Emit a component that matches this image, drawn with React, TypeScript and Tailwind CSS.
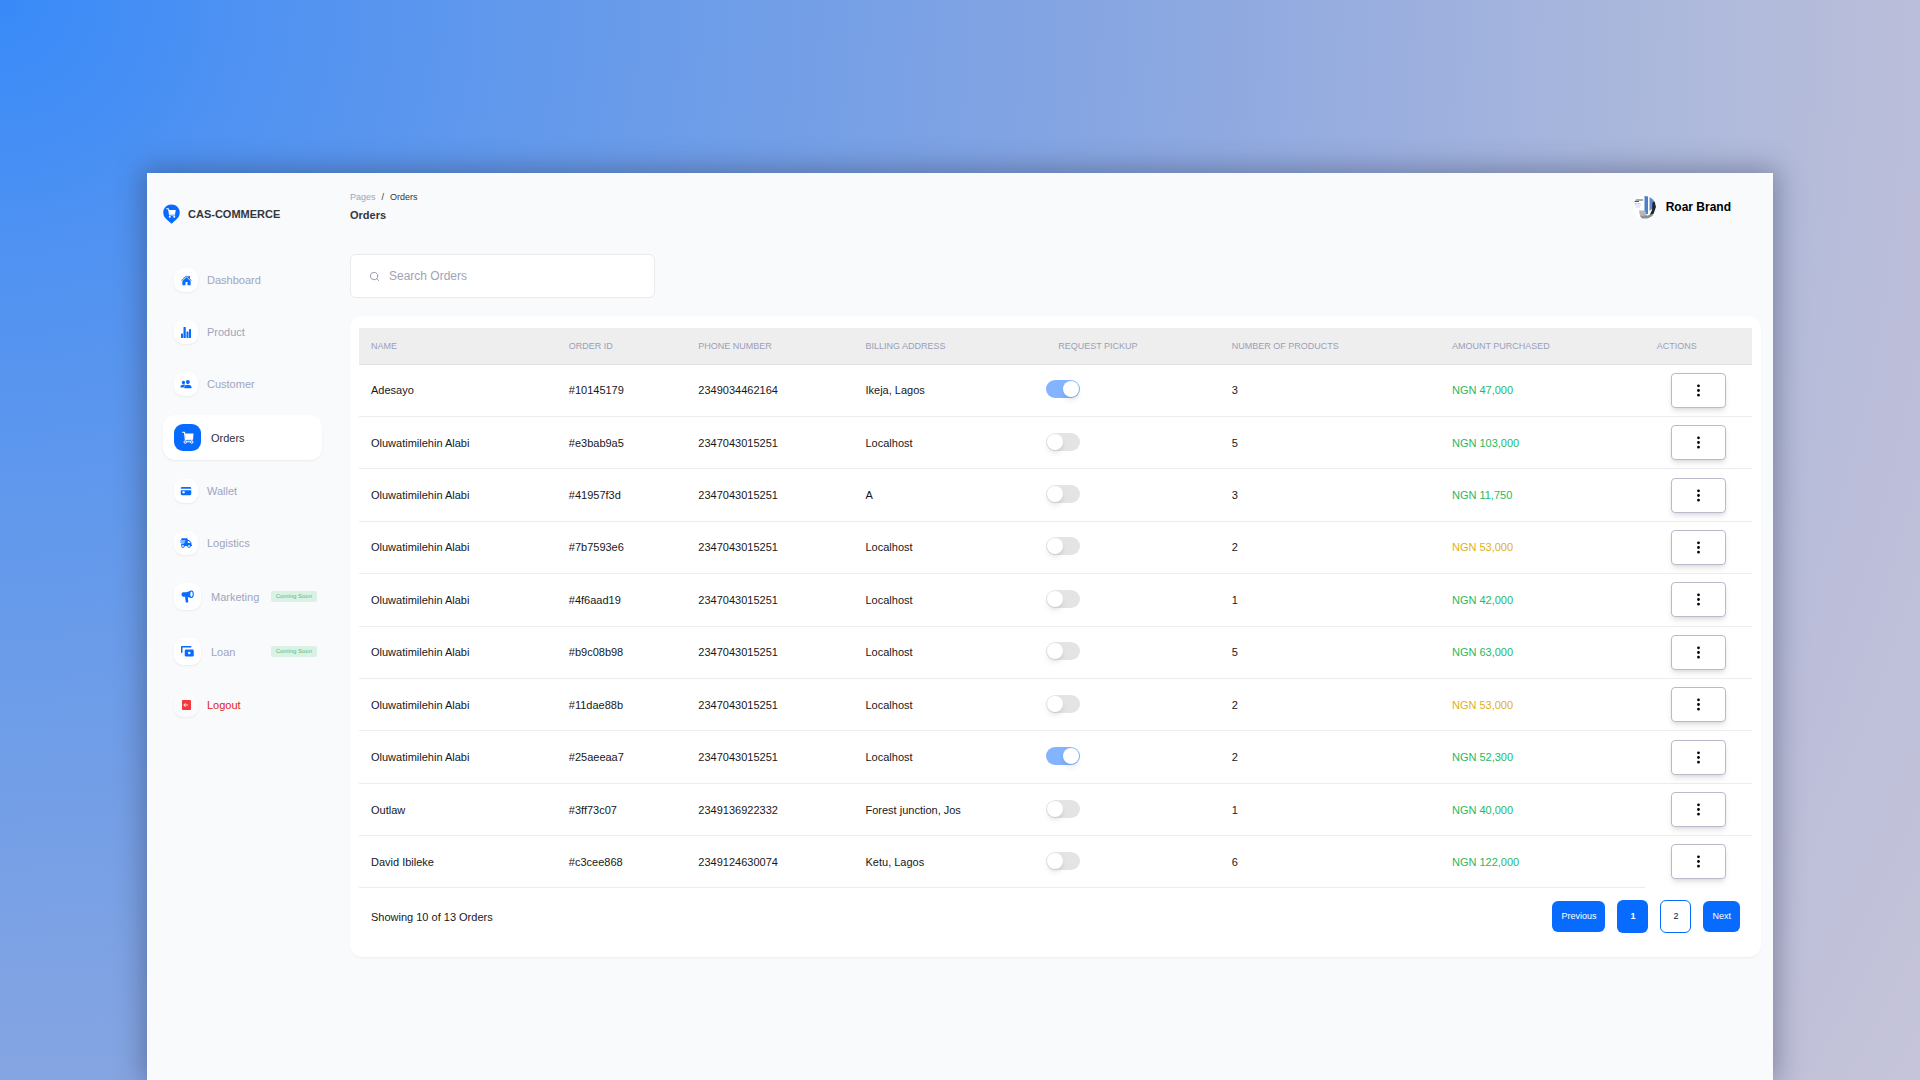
import clsx from "clsx";
import { useState } from "react";
import type { ReactNode } from "react";
import { BsThreeDotsVertical } from "react-icons/bs";
import { FaShippingFast } from "react-icons/fa";
import { IoCard, IoHome, IoPeople } from "react-icons/io5";
import { FiSearch } from "react-icons/fi";

type NavItem = {
  label: string;
  icon: ReactNode;
  big?: boolean;
  active?: boolean;
  soon?: boolean;
  danger?: boolean;
};

type Order = {
  name: string;
  id: string;
  phone: string;
  address: string;
  pickup: boolean;
  products: number;
  amount: string;
  pending?: boolean;
};

const BarsIcon = () => (
  <svg viewBox="0 0 20 22" className="w-[10px] h-[11px]" fill="currentColor">
    <rect x="0" y="13" width="4" height="9" rx="1" />
    <rect x="5" y="0" width="4.500" height="22" rx="1" />
    <rect x="11" y="9" width="4" height="13" rx="1" />
    <rect x="16" y="4" width="4" height="18" rx="1" />
  </svg>
);

const CartIcon = () => (
  <svg viewBox="0 0 24 26" className="w-3 h-[13px]" fill="none">
    <path d="M1 2.5h4l1.6 15h14" stroke="currentColor" strokeWidth="2.2" strokeLinecap="round" strokeLinejoin="round" />
    <path d="M6 5h17l-.8 12H7z" fill="currentColor" />
    <circle cx="6.500" cy="22" r="2.500" stroke="currentColor" strokeWidth="2" />
    <circle cx="19.500" cy="22" r="2.500" stroke="currentColor" strokeWidth="2" />
    <path d="M9 21.500h8" stroke="currentColor" strokeWidth="2" />
  </svg>
);

const MegaphoneIcon = () => (
  <svg viewBox="0 0 26 26" className="w-[13px] h-[13px]" fill="none">
    <path d="M1 9C1 5.500 3 4.500 6 4.500c6 0 10-1 14-3.500v15c-4-2-8-2.500-13-2.500-4 0-6-1-6-4.500z" fill="currentColor" />
    <ellipse cx="21" cy="8.500" rx="3.500" ry="6.500" fill="#fff" stroke="currentColor" strokeWidth="2.200" />
    <path d="M8 13h5.500l1 10.500c.1 1-.3 1.500-1.300 1.500h-2.400c-.8 0-1.200-.4-1.300-1.200z" fill="currentColor" />
  </svg>
);

const LoanIcon = () => (
  <svg viewBox="0 0 26 22" className="w-[13px] h-[11px]" fill="none">
    <path d="M1.5 12.5v-11h18" stroke="currentColor" strokeWidth="3" strokeLinecap="round" strokeLinejoin="round" />
    <rect x="7.500" y="7" width="18" height="14" rx="2.5" fill="currentColor" />
    <circle cx="16.500" cy="14" r="2.500" fill="#fff" />
  </svg>
);

const LogoutIcon = () => (
  <svg viewBox="0 0 18 20" className="w-[9px] h-[10px]" fill="none">
    <rect width="18" height="20" rx="1.5" fill="currentColor" />
    <path d="M7 6.5L3.5 10L7 13.5M4 10h8" stroke="#fff" strokeWidth="1.8" />
  </svg>
);

const Logo = () => (
  <svg viewBox="0 0 34 40" className="w-[17px] h-5 shrink-0">
    <path d="M17 1C8 1 0.5 8 0.5 17c0 7 4 11.500 8 15l8.500 7.500 8.500-7.500c4-3.500 8-8 8-15C33.500 8 26 1 17 1z" fill="#086bff" />
    <path d="M7.500 9.500h3.500l2 12.500h10.500" stroke="#fff" strokeWidth="2" fill="none" strokeLinecap="round" />
    <path d="M11.500 12h14l-1.500 9h-11z" fill="#fff" />
    <circle cx="13.500" cy="25.500" r="2" fill="#fff" />
    <circle cx="22.500" cy="25.500" r="2" fill="#fff" />
  </svg>
);

const Avatar = () => (
  <svg viewBox="0 0 46 46" className="w-[23px] h-[23px] rounded-full">
    <rect width="46" height="46" fill="#fff" />
    <path d="M2 8h18M2 11h10" stroke="#555" strokeWidth="2" />
    <path d="M3 15h12M3 18h13M5 22h9" stroke="#b9c6ee" strokeWidth="1.500" />
    <path d="M23 0h7v36h-7z" fill="#4d7fc4" />
    <path d="M33 0h6l4 8v14l-10 8z" fill="#5b8bcb" />
    <path d="M39 13l5-3 2 12-5 14-8 3 5-11z" fill="#23252e" />
    <path d="M12 29h12l4 11H14z" fill="#b4b6ba" />
    <path d="M14 40l15-1 9-3 3 3-11 6H18z" fill="#8b8e94" />
  </svg>
);

const navItems: NavItem[] = [
  { label: "Dashboard", icon: <IoHome size={11} /> },
  { label: "Product", icon: <BarsIcon /> },
  { label: "Customer", icon: <IoPeople size={12} /> },
  { label: "Orders", icon: <CartIcon />, big: true, active: true },
  { label: "Wallet", icon: <IoCard size={12} /> },
  { label: "Logistics", icon: <FaShippingFast size={12} /> },
  { label: "Marketing", icon: <MegaphoneIcon />, big: true, soon: true },
  { label: "Loan", icon: <LoanIcon />, big: true, soon: true },
  { label: "Logout", icon: <LogoutIcon />, danger: true },
];

const orders: Order[] = [
  { name: "Adesayo", id: "#10145179", phone: "2349034462164", address: "Ikeja, Lagos", pickup: true, products: 3, amount: "NGN 47,000" },
  { name: "Oluwatimilehin Alabi", id: "#e3bab9a5", phone: "2347043015251", address: "Localhost", pickup: false, products: 5, amount: "NGN 103,000" },
  { name: "Oluwatimilehin Alabi", id: "#41957f3d", phone: "2347043015251", address: "A", pickup: false, products: 3, amount: "NGN 11,750" },
  { name: "Oluwatimilehin Alabi", id: "#7b7593e6", phone: "2347043015251", address: "Localhost", pickup: false, products: 2, amount: "NGN 53,000", pending: true },
  { name: "Oluwatimilehin Alabi", id: "#4f6aad19", phone: "2347043015251", address: "Localhost", pickup: false, products: 1, amount: "NGN 42,000" },
  { name: "Oluwatimilehin Alabi", id: "#b9c08b98", phone: "2347043015251", address: "Localhost", pickup: false, products: 5, amount: "NGN 63,000" },
  { name: "Oluwatimilehin Alabi", id: "#11dae88b", phone: "2347043015251", address: "Localhost", pickup: false, products: 2, amount: "NGN 53,000", pending: true },
  { name: "Oluwatimilehin Alabi", id: "#25aeeaa7", phone: "2347043015251", address: "Localhost", pickup: true, products: 2, amount: "NGN 52,300" },
  { name: "Outlaw", id: "#3ff73c07", phone: "2349136922332", address: "Forest junction, Jos", pickup: false, products: 1, amount: "NGN 40,000" },
  { name: "David Ibileke", id: "#c3cee868", phone: "2349124630074", address: "Ketu, Lagos", pickup: false, products: 6, amount: "NGN 122,000" },
];

const Sidebar = () => (
  <aside className="w-[159px] shrink-0 pt-[31px]">
    <a href="#" className="flex items-center gap-2 text-[11px] leading-5 font-bold text-[#33363d]">
      <Logo />
      CAS-COMMERCE
    </a>
    <nav className="mt-[35px] flex flex-col gap-[10px]">
      {navItems.map((item) => (
        <a
          key={item.label}
          href="#"
          className={clsx(
            "flex items-center rounded-xl py-[9px] pl-[11px] pr-[5px] text-[11px] leading-4",
            item.big ? "gap-[10px]" : "gap-[9px]",
            item.active && "bg-white text-[#2f3136] shadow-sm shadow-black/5",
            item.danger && "text-[#e02424]",
            !item.active && !item.danger && "text-[#a0a4c0]"
          )}
        >
          <span
            className={clsx(
              "flex items-center justify-center rounded-[9px]",
              item.big ? "w-[27px] h-[27px]" : "w-6 h-6",
              item.active ? "bg-[#086bff] text-white" : "shadow-sm shadow-black/5",
              item.danger ? "bg-[#fafbfc] text-[#f03a3e]" : !item.active && "bg-white text-[#086bff]"
            )}
          >
            {item.icon}
          </span>
          {item.label}
          {item.soon && (
            <span className="ml-auto rounded-xs bg-[#dcf1e5] px-[5px] text-[6px] leading-[11px] text-[#4cc280]">
              Coming Soon
            </span>
          )}
        </a>
      ))}
    </nav>
  </aside>
);

const Toggle = ({ label, defaultOn }: { label: string; defaultOn: boolean }) => {
  const [on, setOn] = useState(defaultOn);

  return (
    <label className="block w-fit pb-[2px] cursor-pointer">
      <input
        type="checkbox"
        aria-label={label}
        checked={on}
        onChange={(e) => setOn(e.target.checked)}
        className="peer sr-only"
      />
      <span className="flex w-[34px] h-[18px] items-center rounded-full bg-[#e4e4e5] px-px peer-checked:justify-end peer-checked:bg-[#84b4ff]">
        <span className="w-4 h-4 rounded-full bg-white shadow-md shadow-black/10"></span>
      </span>
    </label>
  );
};

const OrdersTable = () => (
  <table className="w-full h-[560px] table-fixed border-collapse text-left text-[11px] leading-4 text-[#17181b]">
    <colgroup>
      <col className="w-[14.2%]" />
      <col className="w-[9.3%]" />
      <col className="w-[12%]" />
      <col className="w-[12.9%]" />
      <col className="w-[13.4%]" />
      <col className="w-[15.8%]" />
      <col className="w-[14.7%]" />
      <col />
    </colgroup>
    <thead>
      <tr className="h-9 bg-[#eeeeee] text-[9px] text-[#9a9eba] uppercase border-b border-[#e2e3e6]">
        <th className="px-3 font-normal">Name</th>
        <th className="px-3 font-normal">Order ID</th>
        <th className="px-3 font-normal">Phone Number</th>
        <th className="px-3 font-normal">Billing Address</th>
        <th className="px-[25px] font-normal">Request Pickup</th>
        <th className="px-3 font-normal">Number of Products</th>
        <th className="px-3 font-normal">Amount Purchased</th>
        <th className="px-3 font-normal">Actions</th>
      </tr>
    </thead>
    <tbody>
      {orders.map((order) => (
        <tr key={order.id} className="group *:border-b *:border-[#ececee]">
          <td className="px-3">{order.name}</td>
          <td className="px-3">{order.id}</td>
          <td className="px-3">{order.phone}</td>
          <td className="px-3">{order.address}</td>
          <td className="px-[13px]">
            <Toggle label={`Request pickup for ${order.id}`} defaultOn={order.pickup} />
          </td>
          <td className="px-3">{order.products}</td>
          <td className={clsx("px-3", order.pending ? "text-[#e0b020]" : "text-[#27b862]")}>
            {order.amount}
          </td>
          <td className="pl-[26px] group-last:border-b-0">
            <button
              type="button"
              aria-label={`Actions for ${order.id}`}
              className="flex w-[55px] h-[35px] items-center justify-center rounded-sm border border-[#b9bacb] bg-white text-black shadow-md shadow-black/10"
            >
              <BsThreeDotsVertical size={15} />
            </button>
          </td>
        </tr>
      ))}
    </tbody>
  </table>
);

const Pagination = () => (
  <div className="flex items-center justify-between px-3 pt-3">
    <p className="text-[11px] leading-4 text-[#17181b]">Showing 10 of 13 Orders</p>
    <div className="flex items-center gap-3 text-[9px] text-white">
      <button type="button" className="h-[31px] rounded-md bg-[#086bff] px-[9px]">
        Previous
      </button>
      <button type="button" className="w-[31px] h-[33px] rounded-md bg-[#086bff] font-bold">
        1
      </button>
      <button type="button" className="w-[31px] h-[33px] rounded-md border border-[#086bff] bg-white text-[#17181b]">
        2
      </button>
      <button type="button" className="h-[31px] rounded-md bg-[#086bff] px-[9px]">
        Next
      </button>
    </div>
  </div>
);

const App = () => {
  const [search, setSearch] = useState("");

  return (
    <div className="flex min-h-screen bg-[radial-gradient(circle_at_top_left,#388af9_0px,#4f92f2_250px,#689bea_620px,#85a5e2_1080px,#9bafdf_1400px,#a9b7dc_1620px,#b2bbdb_1770px,#bcbed9_1940px,#c5c4da_2200px)] px-[147px] pt-[173px] font-['Liberation_Sans',Arial,sans-serif]">
      <div className="flex grow gap-7 bg-[#f8fafb] pl-4 pr-3 shadow-[0_0_26px_4px_rgba(45,52,80,0.42)]">
        <Sidebar />

        <main className="grow min-w-0">
          {/* Breadcrumb / profile */}
          <header className="flex justify-between pt-4">
            <div>
              <ol className="flex gap-[6px] text-[9px] leading-4 text-[#33363d]">
                <li>
                  <a href="#" className="text-[#a0a4c0]">
                    Pages
                  </a>
                </li>
                <li>/</li>
                <li>Orders</li>
              </ol>
              <h1 className="text-[11px] leading-5 font-bold text-[#33363d]">Orders</h1>
            </div>
            <div className="flex h-9 items-center gap-[10px] pr-[30px] text-xs font-bold text-black">
              <Avatar />
              Roar Brand
            </div>
          </header>

          {/* Search */}
          <label className="mt-[29px] flex h-11 w-[305px] items-center gap-[9px] rounded-md border border-[#e8eaed] bg-white px-[18px]">
            <FiSearch size={11} className="text-[#9396ab]" />
            <input
              type="text"
              aria-label="Search Orders"
              placeholder="Search Orders"
              value={search}
              onChange={(e) => setSearch(e.target.value)}
              className="grow text-xs text-[#33363d] outline-none placeholder:text-[#a0a3b5]"
            />
          </label>

          {/* Orders */}
          <section className="mt-[18px] rounded-xl bg-white px-[9px] pt-3 pb-6 shadow-xs shadow-black/5">
            <OrdersTable />
            <Pagination />
          </section>
        </main>
      </div>
    </div>
  );
};

export default App;
